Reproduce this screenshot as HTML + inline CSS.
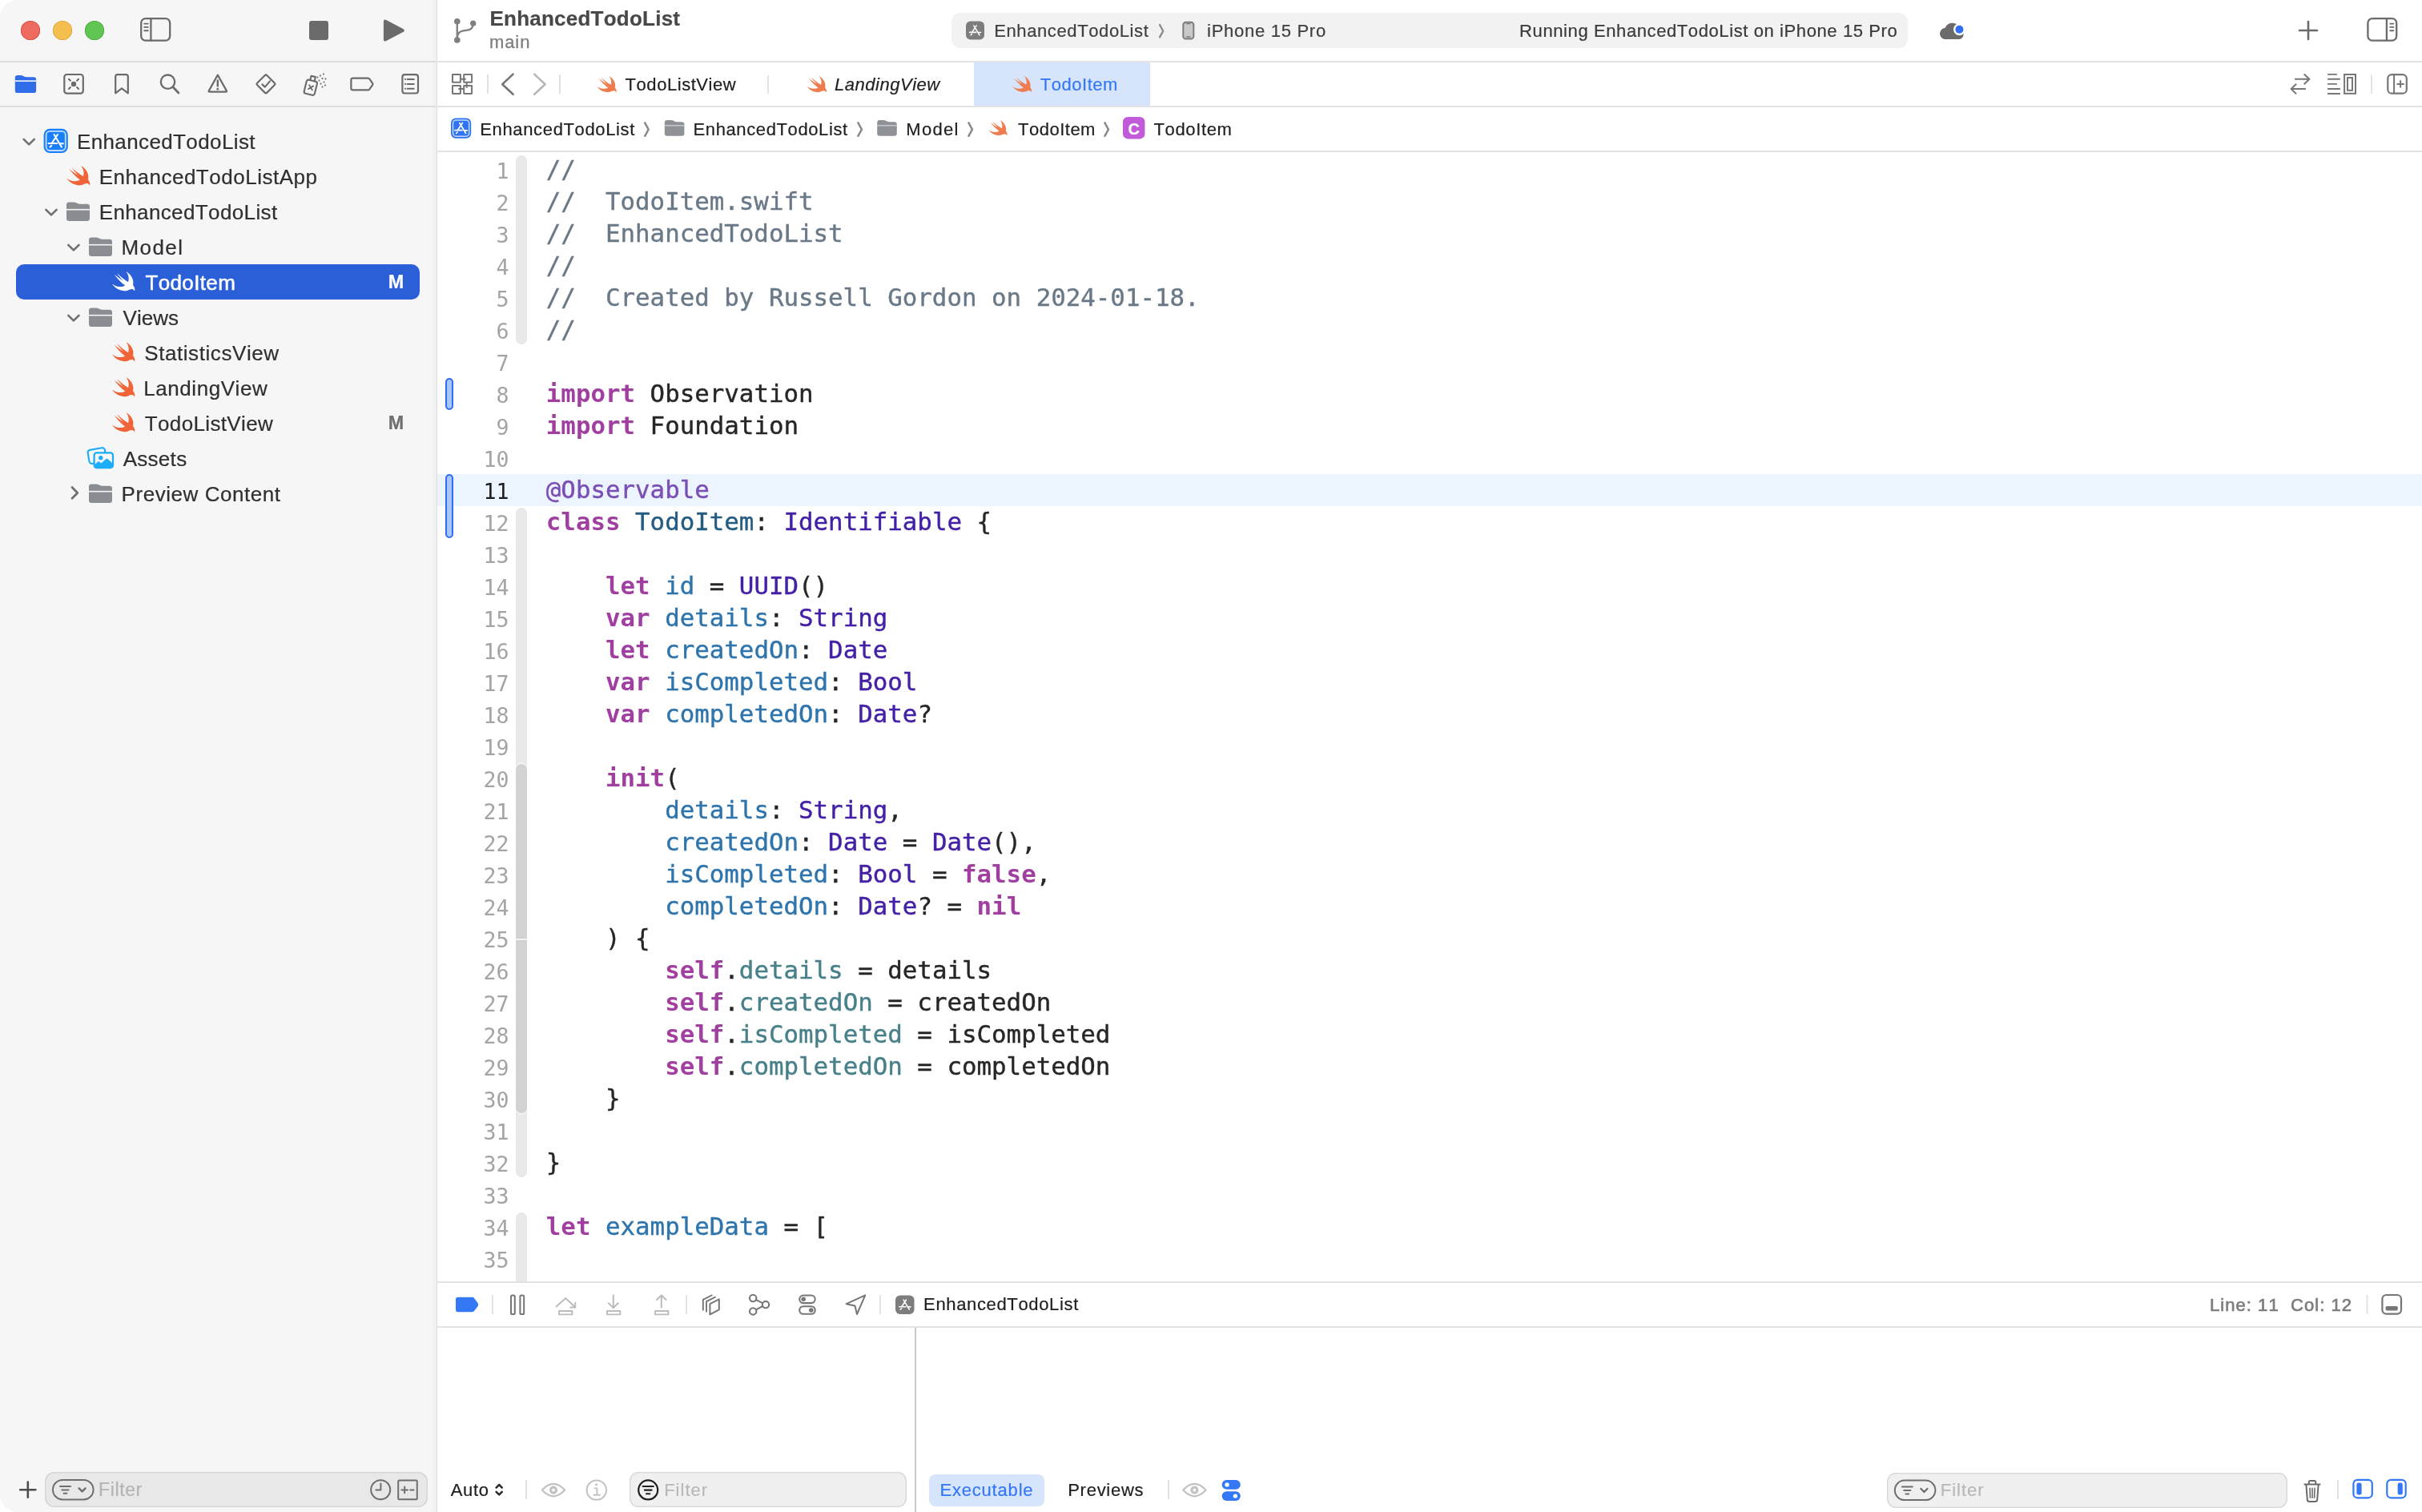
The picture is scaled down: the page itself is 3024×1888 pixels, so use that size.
<!DOCTYPE html>
<html lang="en"><head><meta charset="utf-8"><title>EnhancedTodoList — TodoItem.swift</title>
<style>
html,body{margin:0;padding:0;background:#fff;}
body{width:3024px;height:1888px;overflow:hidden;position:relative;font-family:"Liberation Sans",sans-serif;font-kerning:none;-webkit-font-smoothing:antialiased;}
#win{will-change:transform;position:absolute;left:0;top:0;width:3024px;height:1888px;border-radius:22px;overflow:hidden;background:#fff;}
.b{position:absolute;display:block;}
.t{position:absolute;white-space:pre;-webkit-text-stroke:0.22px;}
.k{color:#a03fa0;font-weight:bold;-webkit-text-stroke:0;}
.c{color:#6a7987;}
.d{color:#2f75ac;}
.td{color:#245c82;}
.s{color:#4320a6;}
.p{color:#48808a;}
.a{color:#7a4eb4;}
.cl{position:absolute;left:681.8px;height:40px;line-height:40px;white-space:pre;font-family:"DejaVu Sans Mono","Liberation Mono",monospace;font-size:30.8px;color:#262626;-webkit-text-stroke:0.4px;}
.ln{position:absolute;left:560px;width:75.5px;text-align:right;height:40px;line-height:40px;font-family:"DejaVu Sans Mono","Liberation Mono",monospace;font-size:26.6px;color:#a4a4a4;}
</style></head><body><div id="win">
<div class="b" style="left:0px;top:0px;width:545px;height:1888px;background:#f6f6f6;"></div>
<div class="b" style="left:537px;top:0px;width:8px;height:1888px;background:linear-gradient(90deg,rgba(0,0,0,0),rgba(0,0,0,0.032));"></div>
<div class="b" style="left:545px;top:0px;width:1.2px;height:1888px;background:#dfdfdf;"></div>
<div class="b" style="left:0px;top:76px;width:543.5px;height:2px;background:#dcdcdc;"></div>
<div class="b" style="left:546px;top:76px;width:2478px;height:2px;background:#e4e4e4;"></div>
<div class="b" style="left:0px;top:132px;width:543.5px;height:2px;background:#dcdcdc;"></div>
<div class="b" style="left:546px;top:132px;width:2478px;height:2px;background:#e4e4e4;"></div>
<div class="b" style="left:546px;top:188px;width:2478px;height:2px;background:#e4e4e4;"></div>
<div class="b" style="left:546px;top:1600px;width:2478px;height:2px;background:#e4e4e4;"></div>
<div class="b" style="left:546px;top:1656px;width:2478px;height:2px;background:#e4e4e4;"></div>
<div class="b" style="left:1142px;top:1658px;width:2px;height:230px;background:#c9c9c9;"></div>
<div class="b" style="left:26px;top:26px;width:24px;height:24px;background:#ed6a5e;border-radius:50%;box-shadow:inset 0 0 0 0.8px #d5493e;"></div>
<div class="b" style="left:66px;top:26px;width:24px;height:24px;background:#f5bf4f;border-radius:50%;box-shadow:inset 0 0 0 0.8px #d8a038;"></div>
<div class="b" style="left:106px;top:26px;width:24px;height:24px;background:#61c554;border-radius:50%;box-shadow:inset 0 0 0 0.8px #4aa73c;"></div>
<div class="t" style="left:611.46px;top:10.09px;font-size:26px;line-height:26px;color:#484848;letter-spacing:0.237px;font-weight:bold;">EnhancedTodoList</div>
<div class="t" style="left:610.94px;top:41.88px;font-size:22px;line-height:22px;color:#7f7f7f;letter-spacing:0.935px;-webkit-text-stroke:0.3px;">main</div>
<div class="b" style="left:1188px;top:16px;width:1194px;height:44px;background:#f2f2f2;border-radius:11px;"></div>
<div class="t" style="left:1241.20px;top:27.68px;font-size:22px;line-height:22px;color:#404040;letter-spacing:0.613px;">EnhancedTodoList</div>
<div class="t" style="left:1507.03px;top:27.68px;font-size:22px;line-height:22px;color:#404040;letter-spacing:0.722px;">iPhone 15 Pro</div>
<div class="t" style="left:1897.10px;top:27.68px;font-size:22px;line-height:22px;color:#3a3a3a;letter-spacing:0.599px;">Running EnhancedTodoList on iPhone 15 Pro</div>
<div class="b" style="left:1216px;top:78px;width:220px;height:54px;background:#d7e5fc;"></div>
<div class="t" style="left:780.61px;top:95.08px;font-size:22px;line-height:22px;color:#1f1f1f;letter-spacing:0.543px;">TodoListView</div>
<div class="t" style="left:1042.12px;top:95.08px;font-size:22px;line-height:22px;color:#1f1f1f;letter-spacing:0.511px;font-style:italic;">LandingView</div>
<div class="t" style="left:1298.71px;top:94.88px;font-size:22px;line-height:22px;color:#3478f6;letter-spacing:0.545px;">TodoItem</div>
<div class="t" style="left:599.30px;top:150.78px;font-size:22px;line-height:22px;color:#1f1f1f;letter-spacing:0.640px;">EnhancedTodoList</div>
<div class="t" style="left:865.50px;top:150.78px;font-size:22px;line-height:22px;color:#1f1f1f;letter-spacing:0.613px;">EnhancedTodoList</div>
<div class="t" style="left:1131.30px;top:150.78px;font-size:22px;line-height:22px;color:#1f1f1f;letter-spacing:1.314px;">Model</div>
<div class="t" style="left:1271.01px;top:150.78px;font-size:22px;line-height:22px;color:#1f1f1f;letter-spacing:0.502px;">TodoItem</div>
<div class="t" style="left:1440.51px;top:150.78px;font-size:22px;line-height:22px;color:#1f1f1f;letter-spacing:0.645px;">TodoItem</div>
<div class="b" style="left:20px;top:330px;width:504px;height:44px;background:#2a5fd8;border-radius:10px;"></div>
<div class="t" style="left:95.97px;top:163.99px;font-size:26px;line-height:26px;color:#303030;letter-spacing:0.380px;">EnhancedTodoList</div>
<div class="t" style="left:123.67px;top:207.99px;font-size:26px;line-height:26px;color:#303030;letter-spacing:0.513px;">EnhancedTodoListApp</div>
<div class="t" style="left:123.67px;top:251.99px;font-size:26px;line-height:26px;color:#303030;letter-spacing:0.380px;">EnhancedTodoList</div>
<div class="t" style="left:151.57px;top:295.99px;font-size:26px;line-height:26px;color:#303030;letter-spacing:1.389px;">Model</div>
<div class="t" style="left:181.42px;top:339.99px;font-size:26px;line-height:26px;color:#ffffff;letter-spacing:0.367px;-webkit-text-stroke:0.5px #fff;">TodoItem</div>
<div class="t" style="left:153.59px;top:383.99px;font-size:26px;line-height:26px;color:#303030;letter-spacing:-0.000px;">Views</div>
<div class="t" style="left:180.22px;top:427.99px;font-size:26px;line-height:26px;color:#303030;letter-spacing:0.572px;">StatisticsView</div>
<div class="t" style="left:179.27px;top:471.99px;font-size:26px;line-height:26px;color:#303030;letter-spacing:0.558px;">LandingView</div>
<div class="t" style="left:180.82px;top:515.99px;font-size:26px;line-height:26px;color:#303030;letter-spacing:0.349px;">TodoListView</div>
<div class="t" style="left:153.65px;top:559.99px;font-size:26px;line-height:26px;color:#303030;letter-spacing:0.293px;">Assets</div>
<div class="t" style="left:151.57px;top:603.99px;font-size:26px;line-height:26px;color:#303030;letter-spacing:0.555px;">Preview Content</div>
<div class="t" style="left:484.63px;top:340.79px;font-size:23.4px;line-height:23.4px;color:#ffffff;letter-spacing:1.438px;font-weight:bold;">M</div>
<div class="t" style="left:484.63px;top:516.79px;font-size:23.4px;line-height:23.4px;color:#707070;letter-spacing:1.438px;font-weight:bold;">M</div>
<div class="t" style="left:1153.10px;top:1618.38px;font-size:22px;line-height:22px;color:#1f1f1f;letter-spacing:0.647px;">EnhancedTodoList</div>
<div class="t" style="left:2758.90px;top:1618.98px;font-size:22px;line-height:22px;color:#7d7d7d;letter-spacing:1.062px;-webkit-text-stroke:0.7px #7d7d7d;">Line: 11  Col: 12</div>
<div class="b" style="left:56px;top:1838px;width:478px;height:44px;background:#e8e8e8;border-radius:12px;box-shadow:inset 0 0 0 1.5px #d6d6d6;"></div>
<div class="t" style="left:123.01px;top:1848.53px;font-size:23px;line-height:23px;color:#b4b4b4;letter-spacing:0.632px;">Filter</div>
<div class="t" style="left:562.76px;top:1849.88px;font-size:22px;line-height:22px;color:#1f1f1f;letter-spacing:0.637px;">Auto</div>
<div class="b" style="left:786px;top:1838px;width:346px;height:44px;background:#f0f0f0;border-radius:11px;box-shadow:inset 0 0 0 1.5px #dadada;"></div>
<div class="t" style="left:829.20px;top:1849.88px;font-size:22px;line-height:22px;color:#b8b8b8;letter-spacing:0.996px;">Filter</div>
<div class="b" style="left:1160px;top:1841px;width:144px;height:40px;background:#d7e5fc;border-radius:8px;"></div>
<div class="t" style="left:1173.40px;top:1849.88px;font-size:22px;line-height:22px;color:#3478f6;letter-spacing:0.815px;">Executable</div>
<div class="t" style="left:1333.20px;top:1849.88px;font-size:22px;line-height:22px;color:#1f1f1f;letter-spacing:0.736px;">Previews</div>
<div class="b" style="left:2356px;top:1839px;width:500px;height:44px;background:#f0f0f0;border-radius:11px;box-shadow:inset 0 0 0 1.5px #dadada;"></div>
<div class="t" style="left:2422.80px;top:1849.88px;font-size:22px;line-height:22px;color:#b8b8b8;letter-spacing:0.996px;">Filter</div>
<div class="b" style="left:546px;top:592px;width:2478px;height:40px;background:#ecf4ff;"></div>
<div class="b" style="left:644px;top:194px;width:14px;height:236px;background:#e8e8e8;border-radius:7px;"></div>
<div class="b" style="left:644px;top:634px;width:14px;height:836px;background:#e8e8e8;border-radius:7px;"></div>
<div class="b" style="left:644px;top:952px;width:14px;height:440px;background:#f4f4f4;border-radius:8px;"></div>
<div class="b" style="left:644px;top:954px;width:14px;height:436px;background:#d2d2d2;border-radius:7px;"></div>
<div class="b" style="left:644px;top:1172px;width:14px;height:2px;background:#f2f2f2;"></div>
<div class="b" style="left:644px;top:1514px;width:14px;height:86px;background:#e8e8e8;border-radius:7px 7px 0 0;"></div>
<div class="b" style="left:556px;top:472px;width:10px;height:40px;background:#a9c6fb;border-radius:5px;box-sizing:border-box;border:2px solid #2f6df6;"></div>
<div class="b" style="left:556px;top:592px;width:10px;height:80px;background:#a9c6fb;border-radius:5px;box-sizing:border-box;border:2px solid #2f6df6;"></div>
<div class="ln" style="top:194.4px;">1</div>
<div class="cl" style="top:191.3px;"><span class="c">//</span></div>
<div class="ln" style="top:234.4px;">2</div>
<div class="cl" style="top:231.3px;"><span class="c">//  TodoItem.swift</span></div>
<div class="ln" style="top:274.4px;">3</div>
<div class="cl" style="top:271.3px;"><span class="c">//  EnhancedTodoList</span></div>
<div class="ln" style="top:314.4px;">4</div>
<div class="cl" style="top:311.3px;"><span class="c">//</span></div>
<div class="ln" style="top:354.4px;">5</div>
<div class="cl" style="top:351.3px;"><span class="c">//  Created by Russell Gordon on 2024-01-18.</span></div>
<div class="ln" style="top:394.4px;">6</div>
<div class="cl" style="top:391.3px;"><span class="c">//</span></div>
<div class="ln" style="top:434.4px;">7</div>
<div class="ln" style="top:474.4px;">8</div>
<div class="cl" style="top:471.3px;"><span class="k">import</span> Observation</div>
<div class="ln" style="top:514.4px;">9</div>
<div class="cl" style="top:511.3px;"><span class="k">import</span> Foundation</div>
<div class="ln" style="top:554.4px;">10</div>
<div class="ln" style="top:594.4px;color:#1c1c1c;">11</div>
<div class="cl" style="top:591.3px;"><span class="a">@Observable</span></div>
<div class="ln" style="top:634.4px;">12</div>
<div class="cl" style="top:631.3px;"><span class="k">class</span> <span class="td">TodoItem</span>: <span class="s">Identifiable</span> {</div>
<div class="ln" style="top:674.4px;">13</div>
<div class="ln" style="top:714.4px;">14</div>
<div class="cl" style="top:711.3px;">    <span class="k">let</span> <span class="d">id</span> = <span class="s">UUID</span>()</div>
<div class="ln" style="top:754.4px;">15</div>
<div class="cl" style="top:751.3px;">    <span class="k">var</span> <span class="d">details</span>: <span class="s">String</span></div>
<div class="ln" style="top:794.4px;">16</div>
<div class="cl" style="top:791.3px;">    <span class="k">let</span> <span class="d">createdOn</span>: <span class="s">Date</span></div>
<div class="ln" style="top:834.4px;">17</div>
<div class="cl" style="top:831.3px;">    <span class="k">var</span> <span class="d">isCompleted</span>: <span class="s">Bool</span></div>
<div class="ln" style="top:874.4px;">18</div>
<div class="cl" style="top:871.3px;">    <span class="k">var</span> <span class="d">completedOn</span>: <span class="s">Date</span>?</div>
<div class="ln" style="top:914.4px;">19</div>
<div class="ln" style="top:954.4px;">20</div>
<div class="cl" style="top:951.3px;">    <span class="k">init</span>(</div>
<div class="ln" style="top:994.4px;">21</div>
<div class="cl" style="top:991.3px;">        <span class="d">details</span>: <span class="s">String</span>,</div>
<div class="ln" style="top:1034.4px;">22</div>
<div class="cl" style="top:1031.3px;">        <span class="d">createdOn</span>: <span class="s">Date</span> = <span class="s">Date</span>(),</div>
<div class="ln" style="top:1074.4px;">23</div>
<div class="cl" style="top:1071.3px;">        <span class="d">isCompleted</span>: <span class="s">Bool</span> = <span class="k">false</span>,</div>
<div class="ln" style="top:1114.4px;">24</div>
<div class="cl" style="top:1111.3px;">        <span class="d">completedOn</span>: <span class="s">Date</span>? = <span class="k">nil</span></div>
<div class="ln" style="top:1154.4px;">25</div>
<div class="cl" style="top:1151.3px;">    ) {</div>
<div class="ln" style="top:1194.4px;">26</div>
<div class="cl" style="top:1191.3px;">        <span class="k">self</span>.<span class="p">details</span> = details</div>
<div class="ln" style="top:1234.4px;">27</div>
<div class="cl" style="top:1231.3px;">        <span class="k">self</span>.<span class="p">createdOn</span> = createdOn</div>
<div class="ln" style="top:1274.4px;">28</div>
<div class="cl" style="top:1271.3px;">        <span class="k">self</span>.<span class="p">isCompleted</span> = isCompleted</div>
<div class="ln" style="top:1314.4px;">29</div>
<div class="cl" style="top:1311.3px;">        <span class="k">self</span>.<span class="p">completedOn</span> = completedOn</div>
<div class="ln" style="top:1354.4px;">30</div>
<div class="cl" style="top:1351.3px;">    }</div>
<div class="ln" style="top:1394.4px;">31</div>
<div class="ln" style="top:1434.4px;">32</div>
<div class="cl" style="top:1431.3px;">}</div>
<div class="ln" style="top:1474.4px;">33</div>
<div class="ln" style="top:1514.4px;">34</div>
<div class="cl" style="top:1511.3px;"><span class="k">let</span> <span class="d">exampleData</span> = [</div>
<div class="ln" style="top:1554.4px;">35</div>
<svg class="b" style="left:0;top:0;" width="3024" height="1888" viewBox="0 0 3024 1888"><rect x="176.2" y="23.2" width="36" height="27.4" rx="5.5" stroke="#6b6b6b" fill="none" stroke-width="2.3" /><path d="M188.4,23.2 V50.6" stroke="#6b6b6b" fill="none" stroke-width="2.3" stroke-linecap="round" stroke-linejoin="round" /><path d="M180.2,29.6 H184.8 M180.2,33.9 H184.8 M180.2,38.3 H184.8" stroke="#6b6b6b" fill="none" stroke-width="1.9" stroke-linecap="round" stroke-linejoin="round" /><rect x="386" y="26" width="24" height="24" rx="3.2" stroke="none" fill="#6b6b6b" stroke-width="2.2" /><path d="M480.9,26.4 L502.8,38 L480.9,49.6 Z" stroke="#6b6b6b" fill="#6b6b6b" stroke-width="4" stroke-linecap="round" stroke-linejoin="round" /><circle cx="570.8" cy="26.8" r="3.8" stroke="none" fill="#7f7f7f" stroke-width="2.2"/><circle cx="590.7" cy="29.2" r="3.6" stroke="none" fill="#7f7f7f" stroke-width="2.2"/><circle cx="570.8" cy="50" r="3.8" stroke="none" fill="#7f7f7f" stroke-width="2.2"/><path d="M570.8,26.8 V50 M590.7,29.2 C590.3,36 587.5,37.3 582,37.8 C575.5,38.4 571.6,40 571,46" stroke="#7f7f7f" fill="none" stroke-width="2.3" stroke-linecap="round" stroke-linejoin="round" /><rect x="1206" y="26.5" width="23" height="23" rx="5.673333333333334" stroke="none" fill="#7d7d7d" stroke-width="2.2" /><path d="M1219.19,31.94 L1213.67,40.15 M1213.44,42.45 L1212.06,43.83 M1215.89,32.02 L1222.94,43.83 M1210.52,40.38 L1218.65,40.38 M1221.72,40.53 L1224.48,40.53" stroke="#fff" stroke-width="1.53" stroke-linecap="round" fill="none"/><path d="M1448,31 L1452.2,38.7 L1448,46.4" stroke="#8a8a8a" fill="none" stroke-width="2.3" stroke-linecap="round" stroke-linejoin="round" /><rect x="1477.3" y="27.8" width="13" height="20.8" rx="3.2" stroke="#7d7d7d" fill="#c9c9c9" stroke-width="2" /><path d="M1481.5,29.6 H1486 M1481.5,46 H1486" stroke="#7d7d7d" fill="none" stroke-width="1.4" stroke-linecap="round" stroke-linejoin="round" /><path d="M2427.6,49 H2445.5 A6.2,6.2 0 0 0 2447,36.8 A9.6,9.6 0 0 0 2428.6,34.8 A7.2,7.2 0 0 0 2427.6,49 Z" stroke="none" fill="#6b6b6b" stroke-width="2.2" stroke-linecap="round" stroke-linejoin="round" /><circle cx="2446.4" cy="36.8" r="7.4" stroke="none" fill="#ffffff" stroke-width="2.2"/><circle cx="2446.4" cy="36.8" r="5" stroke="none" fill="#2f6ff3" stroke-width="2.2"/><path d="M2871,38 H2893 M2882,27 V49" stroke="#6b6b6b" fill="none" stroke-width="2.6" stroke-linecap="round" stroke-linejoin="round" /><rect x="2956.4" y="23.2" width="35.8" height="27.4" rx="5.5" stroke="#6b6b6b" fill="none" stroke-width="2.3" /><path d="M2979.9,23.2 V50.6" stroke="#6b6b6b" fill="none" stroke-width="2.3" stroke-linecap="round" stroke-linejoin="round" /><path d="M2984.2,29.6 H2988.4 M2984.2,33.9 H2988.4 M2984.2,38.3 H2988.4" stroke="#6b6b6b" fill="none" stroke-width="1.9" stroke-linecap="round" stroke-linejoin="round" /><path d="M22.0,93.9 H25.112000000000002 Q27.712000000000003,93.9 29.512,95.165 Q31.112000000000002,96.2 33.712,96.2 H41.9 Q45.1,96.2 45.1,99.4 V112.9 Q45.1,116.10000000000001 41.9,116.10000000000001 H22.0 Q18.8,116.10000000000001 18.8,112.9 V97.10000000000001 Q18.8,93.9 22.0,93.9 Z" fill="#2f6de9"/><rect x="18.8" y="100.34" width="26.3" height="1.6" fill="#f6f6f6"/><rect x="80.3" y="93" width="23.5" height="23.7" rx="3.2" stroke="#6b6b6b" fill="none" stroke-width="2.2" /><circle cx="92" cy="104.9" r="3.2" stroke="none" fill="#6b6b6b" stroke-width="2.2"/><path d="M85.9,98.8 L87.9,100.8 M98.1,98.8 L96.1,100.8 M85.9,111 L87.9,109 M98.1,111 L96.1,109" stroke="#6b6b6b" fill="none" stroke-width="2" stroke-linecap="round" stroke-linejoin="round" /><path d="M144.2,116.4 V95.6 Q144.2,93.1 146.7,93.1 H157.3 Q159.8,93.1 159.8,95.6 V116.4 L152,110.4 Z" stroke="#6b6b6b" fill="none" stroke-width="2.2" stroke-linecap="round" stroke-linejoin="round" /><circle cx="209.5" cy="102.2" r="8.7" stroke="#6b6b6b" fill="none" stroke-width="2.3"/><path d="M216,108.8 L222.9,116" stroke="#6b6b6b" fill="none" stroke-width="2.8" stroke-linecap="round" stroke-linejoin="round" /><path d="M271.8,93.6 L282.9,113.4 Q283.4,114.6 282,114.6 H261.6 Q260.2,114.6 260.8,113.4 Z" stroke="#6b6b6b" fill="none" stroke-width="2.2" stroke-linecap="round" stroke-linejoin="round" /><path d="M271.8,100.4 V107.4" stroke="#6b6b6b" fill="none" stroke-width="2.4" stroke-linecap="round" stroke-linejoin="round" /><circle cx="271.8" cy="111.2" r="1.4" stroke="none" fill="#6b6b6b" stroke-width="2.2"/><path d="M330.6,94.2 Q332,92.8 333.4,94.2 L342.7,103.5 Q344.1,104.9 342.7,106.3 L333.4,115.6 Q332,117 330.6,115.6 L321.3,106.3 Q319.9,104.9 321.3,103.5 Z" stroke="#6b6b6b" fill="none" stroke-width="2.2" stroke-linecap="round" stroke-linejoin="round" /><path d="M327.4,105.4 L330.8,108.6 L337,101.4" stroke="#6b6b6b" fill="none" stroke-width="2.2" stroke-linecap="round" stroke-linejoin="round" /><g transform="rotate(14 392 108)"><rect x="381.5" y="101.5" width="13.5" height="17.5" rx="2.5" stroke="#6b6b6b" fill="none" stroke-width="2.1" /><path d="M385.5,101.5 V96 H391 V101.5" stroke="#6b6b6b" fill="none" stroke-width="2.1" stroke-linecap="round" stroke-linejoin="round" /><path d="M385.8,107.6 L391,112.8 M391,107.6 L385.8,112.8" stroke="#6b6b6b" fill="none" stroke-width="1.8" stroke-linecap="round" stroke-linejoin="round" /></g><rect x="395.6" y="95.6" width="1.8" height="1.8" rx="0.3" stroke="none" fill="#6b6b6b" stroke-width="2.2" /><rect x="399.1" y="93.6" width="1.8" height="1.8" rx="0.3" stroke="none" fill="#6b6b6b" stroke-width="2.2" /><rect x="403.1" y="91.6" width="1.8" height="1.8" rx="0.3" stroke="none" fill="#6b6b6b" stroke-width="2.2" /><rect x="397.6" y="99.6" width="1.8" height="1.8" rx="0.3" stroke="none" fill="#6b6b6b" stroke-width="2.2" /><rect x="401.6" y="97.1" width="1.8" height="1.8" rx="0.3" stroke="none" fill="#6b6b6b" stroke-width="2.2" /><rect x="405.6" y="97.6" width="1.8" height="1.8" rx="0.3" stroke="none" fill="#6b6b6b" stroke-width="2.2" /><rect x="399.6" y="103.6" width="1.8" height="1.8" rx="0.3" stroke="none" fill="#6b6b6b" stroke-width="2.2" /><rect x="403.6" y="101.6" width="1.8" height="1.8" rx="0.3" stroke="none" fill="#6b6b6b" stroke-width="2.2" /><rect x="405.1" y="105.6" width="1.8" height="1.8" rx="0.3" stroke="none" fill="#6b6b6b" stroke-width="2.2" /><rect x="401.6" y="107.6" width="1.8" height="1.8" rx="0.3" stroke="none" fill="#6b6b6b" stroke-width="2.2" /><path d="M440.6,97.6 H459.4 Q460.6,97.6 461.4,98.7 L465.2,104.2 Q465.7,105 465.2,105.8 L461.4,111.3 Q460.6,112.4 459.4,112.4 H440.6 Q438.4,112.4 438.4,110.2 V99.8 Q438.4,97.6 440.6,97.6 Z" stroke="#6b6b6b" fill="none" stroke-width="2.2" stroke-linecap="round" stroke-linejoin="round" /><rect x="502.4" y="93.2" width="19.6" height="23.3" rx="3" stroke="#6b6b6b" fill="none" stroke-width="2.2" /><path d="M508.6,99 H516.8 M508.6,104.9 H516.8 M508.6,110.8 H516.8" stroke="#6b6b6b" fill="none" stroke-width="2" stroke-linecap="round" stroke-linejoin="round" /><circle cx="506" cy="99" r="1.05" stroke="none" fill="#6b6b6b" stroke-width="2.2"/><circle cx="506" cy="104.9" r="1.05" stroke="none" fill="#6b6b6b" stroke-width="2.2"/><circle cx="506" cy="110.8" r="1.05" stroke="none" fill="#6b6b6b" stroke-width="2.2"/><rect x="565" y="92.9" width="9.9" height="9.9" rx="0.3" stroke="#767676" fill="none" stroke-width="2" /><rect x="579.2" y="92.9" width="9.9" height="9.9" rx="0.3" stroke="#767676" fill="none" stroke-width="2" /><rect x="565" y="107" width="9.9" height="9.9" rx="0.3" stroke="#767676" fill="none" stroke-width="2" /><rect x="579.2" y="107" width="9.9" height="9.9" rx="0.3" stroke="#767676" fill="none" stroke-width="2" /><path d="M575,98.8 H581.7 M582.7,103 V109.7 M572.3,111 H579" stroke="#767676" fill="none" stroke-width="2" stroke-linecap="round" stroke-linejoin="round" style="stroke-linecap:butt;stroke-linejoin:miter"/><rect x="608" y="93" width="2" height="24" fill="#e1e1e1"/><rect x="698" y="93" width="2" height="24" fill="#e1e1e1"/><rect x="958" y="94" width="2" height="23" fill="#e4e4e4"/><path d="M640.6,92.6 L627.2,105.2 L640.6,117.8" stroke="#767676" fill="none" stroke-width="2.6" stroke-linecap="round" stroke-linejoin="round" /><path d="M667.2,92.6 L680.6,105.2 L667.2,117.8" stroke="#b7b7b7" fill="none" stroke-width="2.6" stroke-linecap="round" stroke-linejoin="round" /><path d="M13.543 3.41c4.114 2.47 6.545 7.162 5.549 11.131-.024.093-.05.181-.076.272l.002.001c2.062 2.538 1.5 5.258 1.236 4.745-1.072-2.086-3.066-1.568-4.088-1.043a6.803 6.803 0 0 1-.281.158l-.02.012-.002.002c-2.115 1.123-4.957 1.205-7.812-.022a12.568 12.568 0 0 1-5.64-4.838c.649.48 1.35.902 2.097 1.252 3.019 1.414 6.051 1.311 8.197-.002C9.651 12.73 7.101 9.67 5.146 7.191a10.628 10.628 0 0 1-1.005-1.384c2.34 2.142 6.038 4.83 7.365 5.576C8.69 8.408 6.208 4.743 6.324 4.86c4.436 4.47 8.528 6.996 8.528 6.996.154.085.27.154.36.213.085-.215.16-.437.224-.668.708-2.588-.09-5.548-1.893-7.992z" fill="#ef7c4e" transform="translate(742.06,90.77) scale(1.3497,1.2455)"/><path d="M13.543 3.41c4.114 2.47 6.545 7.162 5.549 11.131-.024.093-.05.181-.076.272l.002.001c2.062 2.538 1.5 5.258 1.236 4.745-1.072-2.086-3.066-1.568-4.088-1.043a6.803 6.803 0 0 1-.281.158l-.02.012-.002.002c-2.115 1.123-4.957 1.205-7.812-.022a12.568 12.568 0 0 1-5.64-4.838c.649.48 1.35.902 2.097 1.252 3.019 1.414 6.051 1.311 8.197-.002C9.651 12.73 7.101 9.67 5.146 7.191a10.628 10.628 0 0 1-1.005-1.384c2.34 2.142 6.038 4.83 7.365 5.576C8.69 8.408 6.208 4.743 6.324 4.86c4.436 4.47 8.528 6.996 8.528 6.996.154.085.27.154.36.213.085-.215.16-.437.224-.668.708-2.588-.09-5.548-1.893-7.992z" fill="#ef7c4e" transform="translate(1004.36,90.77) scale(1.3497,1.2455)"/><path d="M13.543 3.41c4.114 2.47 6.545 7.162 5.549 11.131-.024.093-.05.181-.076.272l.002.001c2.062 2.538 1.5 5.258 1.236 4.745-1.072-2.086-3.066-1.568-4.088-1.043a6.803 6.803 0 0 1-.281.158l-.02.012-.002.002c-2.115 1.123-4.957 1.205-7.812-.022a12.568 12.568 0 0 1-5.64-4.838c.649.48 1.35.902 2.097 1.252 3.019 1.414 6.051 1.311 8.197-.002C9.651 12.73 7.101 9.67 5.146 7.191a10.628 10.628 0 0 1-1.005-1.384c2.34 2.142 6.038 4.83 7.365 5.576C8.69 8.408 6.208 4.743 6.324 4.86c4.436 4.47 8.528 6.996 8.528 6.996.154.085.27.154.36.213.085-.215.16-.437.224-.668.708-2.588-.09-5.548-1.893-7.992z" fill="#ef7c4e" transform="translate(1260.80,90.81) scale(1.3333,1.2335)"/><path d="M2865.1,98.8 H2882.6 M2876.7,92.5 L2883.4,98.8 L2876.7,105.3 M2878.9,111 H2861.6 M2867.1,104.7 L2860.6,111 L2867.1,117.4" stroke="#767676" fill="none" stroke-width="2" stroke-linecap="round" stroke-linejoin="round" style="stroke-linecap:butt"/><path d="M2906.1,92.9 H2917.9 M2906.1,98.8 H2921.9 M2906.1,104.9 H2917.9 M2906.1,111 H2921.9 M2906.1,117 H2921.9" stroke="#767676" fill="none" stroke-width="1.9" stroke-linecap="round" stroke-linejoin="round" style="stroke-linecap:butt;stroke-linejoin:miter"/><rect x="2927.1" y="93" width="13.9" height="23.8" rx="0" stroke="#767676" fill="none" stroke-width="2" /><rect x="2931" y="97" width="6" height="15.8" rx="0" stroke="#767676" fill="none" stroke-width="2" /><rect x="2960" y="93.5" width="2" height="23.5" fill="#e3e3e3"/><rect x="2981.3" y="93.1" width="23.5" height="23.6" rx="5" stroke="#767676" fill="none" stroke-width="2.2" /><path d="M2989.1,93.1 V116.7 M2992.5,104.9 H3001.7 M2997.1,100.3 V109.5" stroke="#767676" fill="none" stroke-width="2" stroke-linecap="round" stroke-linejoin="round" style="stroke-linecap:butt;stroke-linejoin:miter"/><rect x="563" y="147.5" width="25.2" height="25.2" rx="6.216" stroke="none" fill="#2f73f2" stroke-width="2.2" /><rect x="565.52" y="150.02" width="20.16" height="20.16" rx="3.8639999999999994" stroke="rgba(255,255,255,0.72)" fill="none" stroke-width="1.512" /><path d="M577.45,153.46 L571.40,162.45 M571.15,164.97 L569.64,166.48 M573.84,153.55 L581.56,166.48 M567.96,162.70 L576.86,162.70 M580.22,162.87 L583.24,162.87" stroke="#fff" stroke-width="1.68" stroke-linecap="round" fill="none"/><path d="M833.0,150 H837.18 Q839.78,150 841.5799999999999,151.265 Q843.18,152.3 845.78,152.3 H851.1999999999999 Q854.4,152.3 854.4,155.5 V166.60000000000002 Q854.4,169.8 851.1999999999999,169.8 H833.0 Q829.8,169.8 829.8,166.60000000000002 V153.2 Q829.8,150 833.0,150 Z" fill="#8e9296"/><rect x="829.8" y="155.94" width="24.6" height="1.6" fill="#c4c6c9"/><path d="M1098.4,150 H1102.5800000000002 Q1105.18,150 1106.9800000000002,151.265 Q1108.5800000000002,152.3 1111.18,152.3 H1116.6 Q1119.8,152.3 1119.8,155.5 V166.60000000000002 Q1119.8,169.8 1116.6,169.8 H1098.4 Q1095.2,169.8 1095.2,166.60000000000002 V153.2 Q1095.2,150 1098.4,150 Z" fill="#8e9296"/><rect x="1095.2" y="155.94" width="24.6" height="1.6" fill="#c4c6c9"/><path d="M13.543 3.41c4.114 2.47 6.545 7.162 5.549 11.131-.024.093-.05.181-.076.272l.002.001c2.062 2.538 1.5 5.258 1.236 4.745-1.072-2.086-3.066-1.568-4.088-1.043a6.803 6.803 0 0 1-.281.158l-.02.012-.002.002c-2.115 1.123-4.957 1.205-7.812-.022a12.568 12.568 0 0 1-5.64-4.838c.649.48 1.35.902 2.097 1.252 3.019 1.414 6.051 1.311 8.197-.002C9.651 12.73 7.101 9.67 5.146 7.191a10.628 10.628 0 0 1-1.005-1.384c2.34 2.142 6.038 4.83 7.365 5.576C8.69 8.408 6.208 4.743 6.324 4.86c4.436 4.47 8.528 6.996 8.528 6.996.154.085.27.154.36.213.085-.215.16-.437.224-.668.708-2.588-.09-5.548-1.893-7.992z" fill="#ef7c4e" transform="translate(1231.20,146.01) scale(1.2896,1.1737)"/><path d="M805.1999999999999,153.4 L809.6999999999999,161.6 L805.1999999999999,169.8" stroke="#8a8a8a" fill="none" stroke-width="2.5" stroke-linecap="round" stroke-linejoin="round" /><path d="M1071.4,153.4 L1075.9,161.6 L1071.4,169.8" stroke="#8a8a8a" fill="none" stroke-width="2.5" stroke-linecap="round" stroke-linejoin="round" /><path d="M1209.4,153.4 L1213.9,161.6 L1209.4,169.8" stroke="#8a8a8a" fill="none" stroke-width="2.5" stroke-linecap="round" stroke-linejoin="round" /><path d="M1379.4,153.4 L1383.9,161.6 L1379.4,169.8" stroke="#8a8a8a" fill="none" stroke-width="2.5" stroke-linecap="round" stroke-linejoin="round" /><rect x="1402" y="146" width="27.4" height="27.4" rx="6.2" stroke="none" fill="#c15bd7" stroke-width="2.2" /><path d="M29.6,173.8 L36.2,180.4 L42.800000000000004,173.8" stroke="#707070" fill="none" stroke-width="2.6" stroke-linecap="round" stroke-linejoin="round" /><rect x="54.6" y="160.8" width="30.2" height="30.2" rx="7.449333333333334" stroke="none" fill="#1a80fa" stroke-width="2.2" /><rect x="57.620000000000005" y="163.82000000000002" width="24.16" height="24.16" rx="4.630666666666666" stroke="rgba(255,255,255,0.72)" fill="none" stroke-width="1.8119999999999998" /><path d="M71.91,167.95 L64.67,178.72 M64.36,181.74 L62.55,183.55 M67.59,168.05 L76.85,183.55 M60.54,179.02 L71.21,179.02 M75.24,179.22 L78.86,179.22" stroke="#fff" stroke-width="2.01" stroke-linecap="round" fill="none"/><path d="M13.543 3.41c4.114 2.47 6.545 7.162 5.549 11.131-.024.093-.05.181-.076.272l.002.001c2.062 2.538 1.5 5.258 1.236 4.745-1.072-2.086-3.066-1.568-4.088-1.043a6.803 6.803 0 0 1-.281.158l-.02.012-.002.002c-2.115 1.123-4.957 1.205-7.812-.022a12.568 12.568 0 0 1-5.64-4.838c.649.48 1.35.902 2.097 1.252 3.019 1.414 6.051 1.311 8.197-.002C9.651 12.73 7.101 9.67 5.146 7.191a10.628 10.628 0 0 1-1.005-1.384c2.34 2.142 6.038 4.83 7.365 5.576C8.69 8.408 6.208 4.743 6.324 4.86c4.436 4.47 8.528 6.996 8.528 6.996.154.085.27.154.36.213.085-.215.16-.437.224-.668.708-2.588-.09-5.548-1.893-7.992z" fill="#ef6438" transform="translate(79.57,201.87) scale(1.5956,1.5090)"/><path d="M57.4,261.8 L64,268.4 L70.6,261.8" stroke="#707070" fill="none" stroke-width="2.6" stroke-linecap="round" stroke-linejoin="round" /><path d="M86.2,252.4 H91.7 Q94.3,252.4 96.10000000000001,253.665 Q97.7,254.70000000000002 100.3,254.70000000000002 H108.8 Q112,254.70000000000002 112,257.90000000000003 V272.8 Q112,276.0 108.8,276.0 H86.2 Q83,276.0 83,272.8 V255.6 Q83,252.4 86.2,252.4 Z" fill="#8a8e93"/><rect x="83" y="260.90" width="29" height="1.6" fill="#f6f6f6"/><path d="M85.30000000000001,305.8 L91.9,312.4 L98.5,305.8" stroke="#707070" fill="none" stroke-width="2.6" stroke-linecap="round" stroke-linejoin="round" /><path d="M114.2,296.4 H119.7 Q122.3,296.4 124.10000000000001,297.66499999999996 Q125.7,298.7 128.3,298.7 H136.8 Q140,298.7 140,301.9 V316.8 Q140,320.0 136.8,320.0 H114.2 Q111,320.0 111,316.8 V299.59999999999997 Q111,296.4 114.2,296.4 Z" fill="#8a8e93"/><rect x="111" y="304.90" width="29" height="1.6" fill="#f6f6f6"/><path d="M13.543 3.41c4.114 2.47 6.545 7.162 5.549 11.131-.024.093-.05.181-.076.272l.002.001c2.062 2.538 1.5 5.258 1.236 4.745-1.072-2.086-3.066-1.568-4.088-1.043a6.803 6.803 0 0 1-.281.158l-.02.012-.002.002c-2.115 1.123-4.957 1.205-7.812-.022a12.568 12.568 0 0 1-5.64-4.838c.649.48 1.35.902 2.097 1.252 3.019 1.414 6.051 1.311 8.197-.002C9.651 12.73 7.101 9.67 5.146 7.191a10.628 10.628 0 0 1-1.005-1.384c2.34 2.142 6.038 4.83 7.365 5.576C8.69 8.408 6.208 4.743 6.324 4.86c4.436 4.47 8.528 6.996 8.528 6.996.154.085.27.154.36.213.085-.215.16-.437.224-.668.708-2.588-.09-5.548-1.893-7.992z" fill="#ffffff" transform="translate(136.25,333.91) scale(1.5628,1.4970)"/><path d="M85.30000000000001,393.8 L91.9,400.4 L98.5,393.8" stroke="#707070" fill="none" stroke-width="2.6" stroke-linecap="round" stroke-linejoin="round" /><path d="M114.2,384.4 H119.7 Q122.3,384.4 124.10000000000001,385.66499999999996 Q125.7,386.7 128.3,386.7 H136.8 Q140,386.7 140,389.9 V404.8 Q140,408.0 136.8,408.0 H114.2 Q111,408.0 111,404.8 V387.59999999999997 Q111,384.4 114.2,384.4 Z" fill="#8a8e93"/><rect x="111" y="392.90" width="29" height="1.6" fill="#f6f6f6"/><path d="M13.543 3.41c4.114 2.47 6.545 7.162 5.549 11.131-.024.093-.05.181-.076.272l.002.001c2.062 2.538 1.5 5.258 1.236 4.745-1.072-2.086-3.066-1.568-4.088-1.043a6.803 6.803 0 0 1-.281.158l-.02.012-.002.002c-2.115 1.123-4.957 1.205-7.812-.022a12.568 12.568 0 0 1-5.64-4.838c.649.48 1.35.902 2.097 1.252 3.019 1.414 6.051 1.311 8.197-.002C9.651 12.73 7.101 9.67 5.146 7.191a10.628 10.628 0 0 1-1.005-1.384c2.34 2.142 6.038 4.83 7.365 5.576C8.69 8.408 6.208 4.743 6.324 4.86c4.436 4.47 8.528 6.996 8.528 6.996.154.085.27.154.36.213.085-.215.16-.437.224-.668.708-2.588-.09-5.548-1.893-7.992z" fill="#ef6438" transform="translate(136.25,421.91) scale(1.5628,1.4970)"/><path d="M13.543 3.41c4.114 2.47 6.545 7.162 5.549 11.131-.024.093-.05.181-.076.272l.002.001c2.062 2.538 1.5 5.258 1.236 4.745-1.072-2.086-3.066-1.568-4.088-1.043a6.803 6.803 0 0 1-.281.158l-.02.012-.002.002c-2.115 1.123-4.957 1.205-7.812-.022a12.568 12.568 0 0 1-5.64-4.838c.649.48 1.35.902 2.097 1.252 3.019 1.414 6.051 1.311 8.197-.002C9.651 12.73 7.101 9.67 5.146 7.191a10.628 10.628 0 0 1-1.005-1.384c2.34 2.142 6.038 4.83 7.365 5.576C8.69 8.408 6.208 4.743 6.324 4.86c4.436 4.47 8.528 6.996 8.528 6.996.154.085.27.154.36.213.085-.215.16-.437.224-.668.708-2.588-.09-5.548-1.893-7.992z" fill="#ef6438" transform="translate(136.25,465.91) scale(1.5628,1.4970)"/><path d="M13.543 3.41c4.114 2.47 6.545 7.162 5.549 11.131-.024.093-.05.181-.076.272l.002.001c2.062 2.538 1.5 5.258 1.236 4.745-1.072-2.086-3.066-1.568-4.088-1.043a6.803 6.803 0 0 1-.281.158l-.02.012-.002.002c-2.115 1.123-4.957 1.205-7.812-.022a12.568 12.568 0 0 1-5.64-4.838c.649.48 1.35.902 2.097 1.252 3.019 1.414 6.051 1.311 8.197-.002C9.651 12.73 7.101 9.67 5.146 7.191a10.628 10.628 0 0 1-1.005-1.384c2.34 2.142 6.038 4.83 7.365 5.576C8.69 8.408 6.208 4.743 6.324 4.86c4.436 4.47 8.528 6.996 8.528 6.996.154.085.27.154.36.213.085-.215.16-.437.224-.668.708-2.588-.09-5.548-1.893-7.992z" fill="#ef6438" transform="translate(136.25,509.91) scale(1.5628,1.4970)"/><rect x="110.4" y="560.4" width="21.6" height="17.4" rx="3.2" stroke="#1badf8" fill="#f6f6f6" stroke-width="2.1" transform="rotate(-10 121.2 569)"/><rect x="117.6" y="565.4" width="23.4" height="18.6" rx="3.2" stroke="#1badf8" fill="#f6f6f6" stroke-width="2.3" /><path d="M118.4,580 L122.2,576.6 Q123.2,575.8 124.2,576.6 L126.2,578.4 L132.2,573.2 Q133.4,572.4 134.6,573.2 L140.2,578.2 V581.4 Q140.2,583.2 138.4,583.2 H120.2 Q118.4,583.2 118.4,581.4 Z" stroke="none" fill="#1badf8" stroke-width="2.2" stroke-linecap="round" stroke-linejoin="round" /><circle cx="125.8" cy="571.8" r="2.7" stroke="none" fill="#1badf8" stroke-width="2.2"/><path d="M90,608.6 L96.8,615.4 L90,622.2" stroke="#707070" fill="none" stroke-width="2.8" stroke-linecap="round" stroke-linejoin="round" /><path d="M114.2,604.4 H119.7 Q122.3,604.4 124.10000000000001,605.665 Q125.7,606.6999999999999 128.3,606.6999999999999 H136.8 Q140,606.6999999999999 140,609.9 V624.8 Q140,628.0 136.8,628.0 H114.2 Q111,628.0 111,624.8 V607.6 Q111,604.4 114.2,604.4 Z" fill="#8a8e93"/><rect x="111" y="612.90" width="29" height="1.6" fill="#f6f6f6"/><path d="M571.6,1619.8 H589.6 Q591.2,1619.8 592.2,1621.2 L596.6,1627 Q597.8,1629 596.6,1631 L592.2,1636.8 Q591.2,1638.2 589.6,1638.2 H571.6 Q569,1638.2 569,1635.6 V1622.4 Q569,1619.8 571.6,1619.8 Z" stroke="none" fill="#3478f6" stroke-width="2.2" stroke-linecap="round" stroke-linejoin="round" /><rect x="614" y="1617" width="2" height="24" fill="#e4e4e4"/><rect x="856" y="1617" width="2" height="24" fill="#e4e4e4"/><rect x="1098" y="1617" width="2" height="24" fill="#e4e4e4"/><rect x="638" y="1617.4" width="4.8" height="23.6" rx="1.6" stroke="#767676" fill="none" stroke-width="2" /><rect x="649.4" y="1617.4" width="4.8" height="23.6" rx="1.6" stroke="#767676" fill="none" stroke-width="2" /><path d="M694,1632 L706.2,1621 L717.4,1631.4 M711.4,1632.6 H718.2 V1626" stroke="#bbbbbb" fill="none" stroke-width="2" stroke-linecap="round" stroke-linejoin="round" style="stroke-linecap:butt;stroke-linejoin:miter"/><rect x="698" y="1637" width="16.4" height="4.4" rx="0.2" stroke="#bbbbbb" fill="none" stroke-width="1.9" /><path d="M765.8,1616.4 V1633 M759.4,1626.8 L765.8,1633.2 L772.2,1626.8" stroke="#bbbbbb" fill="none" stroke-width="2" stroke-linecap="round" stroke-linejoin="round" style="stroke-linecap:butt"/><rect x="758" y="1637" width="16.4" height="4.4" rx="0.2" stroke="#bbbbbb" fill="none" stroke-width="1.9" /><path d="M825.8,1633.6 V1617.6 M819.4,1623.6 L825.8,1617.2 L832.2,1623.6" stroke="#bbbbbb" fill="none" stroke-width="2" stroke-linecap="round" stroke-linejoin="round" style="stroke-linecap:butt"/><rect x="818" y="1637" width="16.4" height="4.4" rx="0.2" stroke="#bbbbbb" fill="none" stroke-width="1.9" /><path d="M886.4,1628.2 L897.8,1622.4 V1635.4 L886.4,1641.4 Z" stroke="#767676" fill="none" stroke-width="2" stroke-linecap="round" stroke-linejoin="round" /><path d="M882,1638.4 V1625.2 L893.6,1619.3" stroke="#767676" fill="none" stroke-width="1.9" stroke-linecap="round" stroke-linejoin="round" style="stroke-linecap:butt"/><path d="M877.8,1636.4 V1622.8 L889.4,1617" stroke="#767676" fill="none" stroke-width="1.9" stroke-linecap="round" stroke-linejoin="round" style="stroke-linecap:butt"/><circle cx="940.2" cy="1621" r="4.2" stroke="#767676" fill="none" stroke-width="2.1"/><circle cx="940.2" cy="1637.4" r="4.2" stroke="#767676" fill="none" stroke-width="2.1"/><circle cx="956" cy="1629.1" r="4.2" stroke="#767676" fill="none" stroke-width="2.1"/><path d="M944,1623.1 L952.2,1627.2 M944,1635.3 L952.2,1631" stroke="#767676" fill="none" stroke-width="2" stroke-linecap="round" stroke-linejoin="round" /><rect x="998.2" y="1617.5" width="19.5" height="9.6" rx="4.8" stroke="#767676" fill="none" stroke-width="2.1" /><rect x="998.2" y="1631.2" width="19.5" height="9.6" rx="4.8" stroke="#767676" fill="none" stroke-width="2.1" /><circle cx="1003.2" cy="1622.2" r="2.8" stroke="none" fill="#767676" stroke-width="2.2"/><circle cx="1012.8" cy="1636" r="2.8" stroke="none" fill="#767676" stroke-width="2.2"/><path d="M1056.6,1628.2 L1080.2,1617.4 L1070,1641 L1067.4,1630.6 Z" stroke="#767676" fill="none" stroke-width="2" stroke-linecap="round" stroke-linejoin="round" /><rect x="1118" y="1617.5" width="23.5" height="23.5" rx="5.796666666666667" stroke="none" fill="#7d7d7d" stroke-width="2.2" /><path d="M1131.47,1623.06 L1125.83,1631.44 M1125.60,1633.79 L1124.19,1635.20 M1128.11,1623.14 L1135.31,1635.20 M1122.62,1631.68 L1130.92,1631.68 M1134.06,1631.84 L1136.88,1631.84" stroke="#fff" stroke-width="1.57" stroke-linecap="round" fill="none"/><rect x="2954.5" y="1617" width="2" height="24" fill="#e4e4e4"/><rect x="2974.4" y="1617" width="23.6" height="23.6" rx="5" stroke="#767676" fill="none" stroke-width="2.2" /><rect x="2978.6" y="1631" width="15.2" height="5.4" rx="1.6" stroke="none" fill="#767676" stroke-width="2.2" /><path d="M25.2,1860.2 H44.4 M34.8,1850.6 V1869.8" stroke="#4d4d4d" fill="none" stroke-width="2.6" stroke-linecap="round" stroke-linejoin="round" /><rect x="66" y="1848" width="50.6" height="24.4" rx="12.2" stroke="#6e6e6e" fill="none" stroke-width="2" /><path d="M75,1856 H88 M77.4,1860.4 H85.6 M79.6,1864.8 H83.4" stroke="#6e6e6e" fill="none" stroke-width="2" stroke-linecap="round" stroke-linejoin="round" /><path d="M98.6,1858.4 L102.6,1862.4 L106.6,1858.4" stroke="#6e6e6e" fill="none" stroke-width="2.4" stroke-linecap="round" stroke-linejoin="round" /><circle cx="475.2" cy="1860.2" r="12" stroke="#6e6e6e" fill="none" stroke-width="2"/><path d="M475.4,1852.6 V1860.6 H469.4" stroke="#6e6e6e" fill="none" stroke-width="2" stroke-linecap="round" stroke-linejoin="round" /><rect x="497.2" y="1848.6" width="23.6" height="23.6" rx="1.5" stroke="#6e6e6e" fill="none" stroke-width="2" /><path d="M501.4,1860.4 H509 M505.2,1856.6 V1864.2 M512.2,1860.4 H516.6" stroke="#6e6e6e" fill="none" stroke-width="2" stroke-linecap="round" stroke-linejoin="round" /><path d="M619.6,1857.6 L623.2,1854 L626.8,1857.6 M619.6,1862.8 L623.2,1866.4 L626.8,1862.8" stroke="#2b2b2b" fill="none" stroke-width="2.5" stroke-linecap="round" stroke-linejoin="round" /><rect x="656" y="1848" width="2" height="24" fill="#e2e2e2"/><path d="M676.8,1860.6 Q691,1845.1999999999998 705.2,1860.6 Q691,1876.0 676.8,1860.6 Z" stroke="#c2c2c2" fill="none" stroke-width="2.2" stroke-linecap="round" stroke-linejoin="round" /><circle cx="691" cy="1860.6" r="3.5" stroke="#c2c2c2" fill="none" stroke-width="3.2"/><circle cx="744.8" cy="1860.6" r="12.2" stroke="#c2c2c2" fill="none" stroke-width="2"/><path d="M742.4,1858.4 H745.4 V1866.6 M741.6,1866.8 H749" stroke="#c2c2c2" fill="none" stroke-width="1.9" stroke-linecap="round" stroke-linejoin="round" /><circle cx="744.6" cy="1853.8" r="1.5" stroke="none" fill="#c2c2c2" stroke-width="2.2"/><circle cx="809.2" cy="1860.4" r="12" stroke="#1f1f1f" fill="none" stroke-width="2.2"/><path d="M802.6,1856 H815.8 M804.8,1860.6 H813.6 M807,1865.2 H811.4" stroke="#1f1f1f" fill="none" stroke-width="2.1" stroke-linecap="round" stroke-linejoin="round" /><rect x="1458" y="1848" width="2" height="24" fill="#e2e2e2"/><path d="M1477.2,1860.6 Q1491.4,1845.1999999999998 1505.6000000000001,1860.6 Q1491.4,1876.0 1477.2,1860.6 Z" stroke="#c2c2c2" fill="none" stroke-width="2.2" stroke-linecap="round" stroke-linejoin="round" /><circle cx="1491.4" cy="1860.6" r="3.5" stroke="#c2c2c2" fill="none" stroke-width="3.2"/><rect x="1525.6" y="1848" width="23.2" height="11.8" rx="5.9" stroke="none" fill="#3478f6" stroke-width="2.2" /><rect x="1525.6" y="1862.2" width="23.2" height="11.8" rx="5.9" stroke="none" fill="#3478f6" stroke-width="2.2" /><circle cx="1532" cy="1853.9" r="2.7" stroke="none" fill="#ffffff" stroke-width="2.2"/><circle cx="1542.4" cy="1868.1" r="2.7" stroke="none" fill="#ffffff" stroke-width="2.2"/><rect x="2365.8" y="1848.6" width="50.6" height="24.4" rx="12.2" stroke="#6e6e6e" fill="none" stroke-width="2" /><path d="M2374.8,1856.6 H2387.8 M2377.2000000000003,1861.0 H2385.4 M2379.4,1865.3999999999999 H2383.2000000000003" stroke="#6e6e6e" fill="none" stroke-width="2" stroke-linecap="round" stroke-linejoin="round" /><path d="M2398.4,1859.0 L2402.4,1863.0 L2406.4,1859.0" stroke="#6e6e6e" fill="none" stroke-width="2.4" stroke-linecap="round" stroke-linejoin="round" /><path d="M2877.4,1853.4 H2896.6 M2882.8,1853 V1850.6 Q2882.8,1849 2884.4,1849 H2889.6 Q2891.2,1849 2891.2,1850.6 V1853" stroke="#6b6b6b" fill="none" stroke-width="2" stroke-linecap="round" stroke-linejoin="round" /><path d="M2879.4,1854 L2880.8,1872.6 Q2881,1875 2883.4,1875 H2890.6 Q2893,1875 2893.2,1872.6 L2894.6,1854" stroke="#6b6b6b" fill="none" stroke-width="2" stroke-linecap="round" stroke-linejoin="round" /><path d="M2884,1858.4 L2884.4,1870.2 M2887,1858.4 V1870.2 M2890,1858.4 L2889.6,1870.2" stroke="#6b6b6b" fill="none" stroke-width="1.6" stroke-linecap="round" stroke-linejoin="round" /><rect x="2918" y="1848" width="2" height="24" fill="#e2e2e2"/><rect x="2938.4" y="1847.9" width="23.4" height="22.4" rx="5" stroke="#3478f6" fill="none" stroke-width="2.2" /><rect x="2942.4" y="1851.6" width="6.2" height="15" rx="2.4" stroke="none" fill="#3478f6" stroke-width="2.2" /><rect x="2980.3" y="1847.9" width="23.4" height="22.4" rx="5" stroke="#3478f6" fill="none" stroke-width="2.2" /><rect x="2993.6" y="1851.6" width="6.2" height="15" rx="2.4" stroke="none" fill="#3478f6" stroke-width="2.2" /></svg>
<div class="t" style="left:1408.38px;top:150.67px;font-size:20px;line-height:20px;color:#ffffff;letter-spacing:0.324px;font-weight:bold;">C</div>
</div></body></html>
